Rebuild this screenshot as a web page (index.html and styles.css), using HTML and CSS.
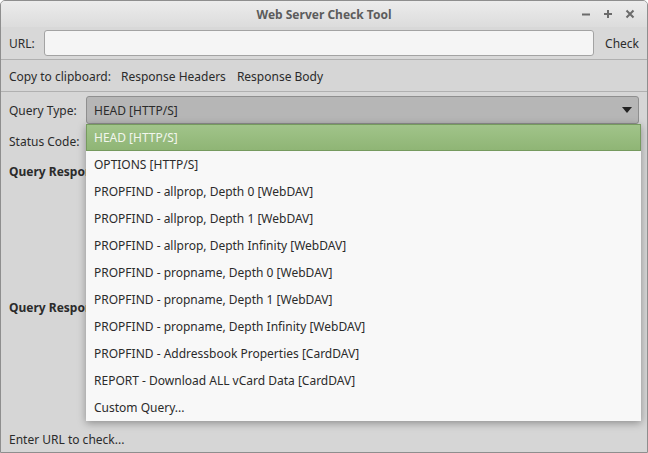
FILE: index.html
```html
<!DOCTYPE html>
<html>
<head>
<meta charset="utf-8">
<link rel="stylesheet" href="styles.css">
</head>
<body>
<div class="window">
  <div class="titlebar">
    <div class="title">Web Server Check Tool</div>
    <div class="controls">
      <svg width="10" height="10" viewBox="0 0 10 10"><path d="M1 5.5H9" stroke="#6b6b6b" stroke-width="2"/></svg>
      <svg width="10" height="10" viewBox="0 0 10 10"><path d="M1 5H9M5 1V9" stroke="#6b6b6b" stroke-width="2"/></svg>
      <svg width="10" height="10" viewBox="0 0 10 10"><path d="M1.5 1.5L8.5 8.5M8.5 1.5L1.5 8.5" stroke="#6b6b6b" stroke-width="2"/></svg>
    </div>
  </div>
  <div class="row url-row">
    <span class="label">URL:</span>
    <div class="input"></div>
    <span class="btn">Check</span>
  </div>
  <div class="row copy-row">
    <span class="label">Copy to clipboard:</span>
    <span class="btn">Response Headers</span>
    <span class="btn">Response Body</span>
  </div>
  <div class="content">
    <div class="qt-row">
      <span class="label qt-label">Query Type:</span>
      <div class="combo"><span>HEAD [HTTP/S]</span>
        <svg width="10" height="7" viewBox="0 0 10 7"><path d="M0 0H10L5 6Z" fill="#222"/></svg>
      </div>
    </div>
    <div class="line first">Status Code:</div>
    <div class="line bold">Query Response Headers</div>
    <div class="spacer"></div>
    <div class="line bold">Query Response Body</div>
  </div>
  <div class="status">Enter URL to check...</div>

  <div class="popup">
    <div class="item sel">HEAD [HTTP/S]</div>
    <div class="item">OPTIONS [HTTP/S]</div>
    <div class="item">PROPFIND - allprop, Depth 0 [WebDAV]</div>
    <div class="item">PROPFIND - allprop, Depth 1 [WebDAV]</div>
    <div class="item">PROPFIND - allprop, Depth Infinity [WebDAV]</div>
    <div class="item">PROPFIND - propname, Depth 0 [WebDAV]</div>
    <div class="item">PROPFIND - propname, Depth 1 [WebDAV]</div>
    <div class="item">PROPFIND - propname, Depth Infinity [WebDAV]</div>
    <div class="item">PROPFIND - Addressbook Properties [CardDAV]</div>
    <div class="item">REPORT - Download ALL vCard Data [CardDAV]</div>
    <div class="item">Custom Query...</div>
  </div>
</div>
</body>
</html>
```
FILE: styles.css
```css
html, body { margin: 0; padding: 0; background: #fff; }
body { font-family: "Noto Sans", sans-serif; font-size: 12px; color: #2b2b2b; }
.window {
  position: relative;
  width: 646px; height: 451px;
  border: 1px solid #8e8e8e;
  border-radius: 5px 5px 0 0;
  background: #d6d6d6;
  overflow: hidden;
  display: flex; flex-direction: column;
}
.titlebar {
  height: 26px; flex: none;
  background: linear-gradient(#ececec, #dcdcdc);
  display: flex; align-items: center; justify-content: center;
  position: relative;
}
.title { font-weight: bold; color: #5c5c5c; font-size: 12px; }
.controls { position: absolute; right: 12px; top: 8px; display: flex; gap: 12px; }
.row { display: flex; align-items: center; flex: none; }
.url-row { height: 32px; padding: 0 8px; background: #d8d8d8; border-bottom: 1px solid #b0b0b0; }
.url-row .label { width: 35px; }
.input { flex: 1; height: 24px; background: #f5f5f5; border: 1px solid #a3a3a3; border-radius: 3px; margin-right: 11px; }
.copy-row { height: 32px; padding: 1px 8px 0; box-sizing: border-box; gap: 14px; border-bottom: 1px solid #b0b0b0; background: #d6d6d6; }
.copy-row .btn { margin-left: -4px; }
.copy-row .btn + .btn { margin-left: -3px; }
.content { flex: 1; padding: 4px 8px 0; display: flex; flex-direction: column; }
.qt-row { display: flex; align-items: center; height: 28px; }
.qt-label { width: 77px; }
.combo { flex: 1; height: 26px; background: #b6b6b6; border: 1px solid #8f8f8f; border-radius: 3px; display: flex; align-items: center; justify-content: space-between; padding: 0 6px 0 7px; }
.line { height: 30px; line-height: 30px; }
.line.first { margin-top: 3px; }
.line.bold { font-weight: bold; }
.spacer { height: 106px; }
.status { height: 27px; flex: none; padding: 0 8px; line-height: 30px; }
.popup {
  position: absolute; left: 85px; top: 123px; width: 555px;
  background: #f8f8f8;
  box-shadow: 0 2px 8px rgba(0,0,0,0.35);
}
.item { height: 27px; line-height: 27px; padding-left: 8px; }
.item.sel { background: linear-gradient(#a1c48a, #8fb575); color: #f2f6ee; border: 1px solid #769a5f; height: 25px; line-height: 25px; padding-left: 7px; }
```
